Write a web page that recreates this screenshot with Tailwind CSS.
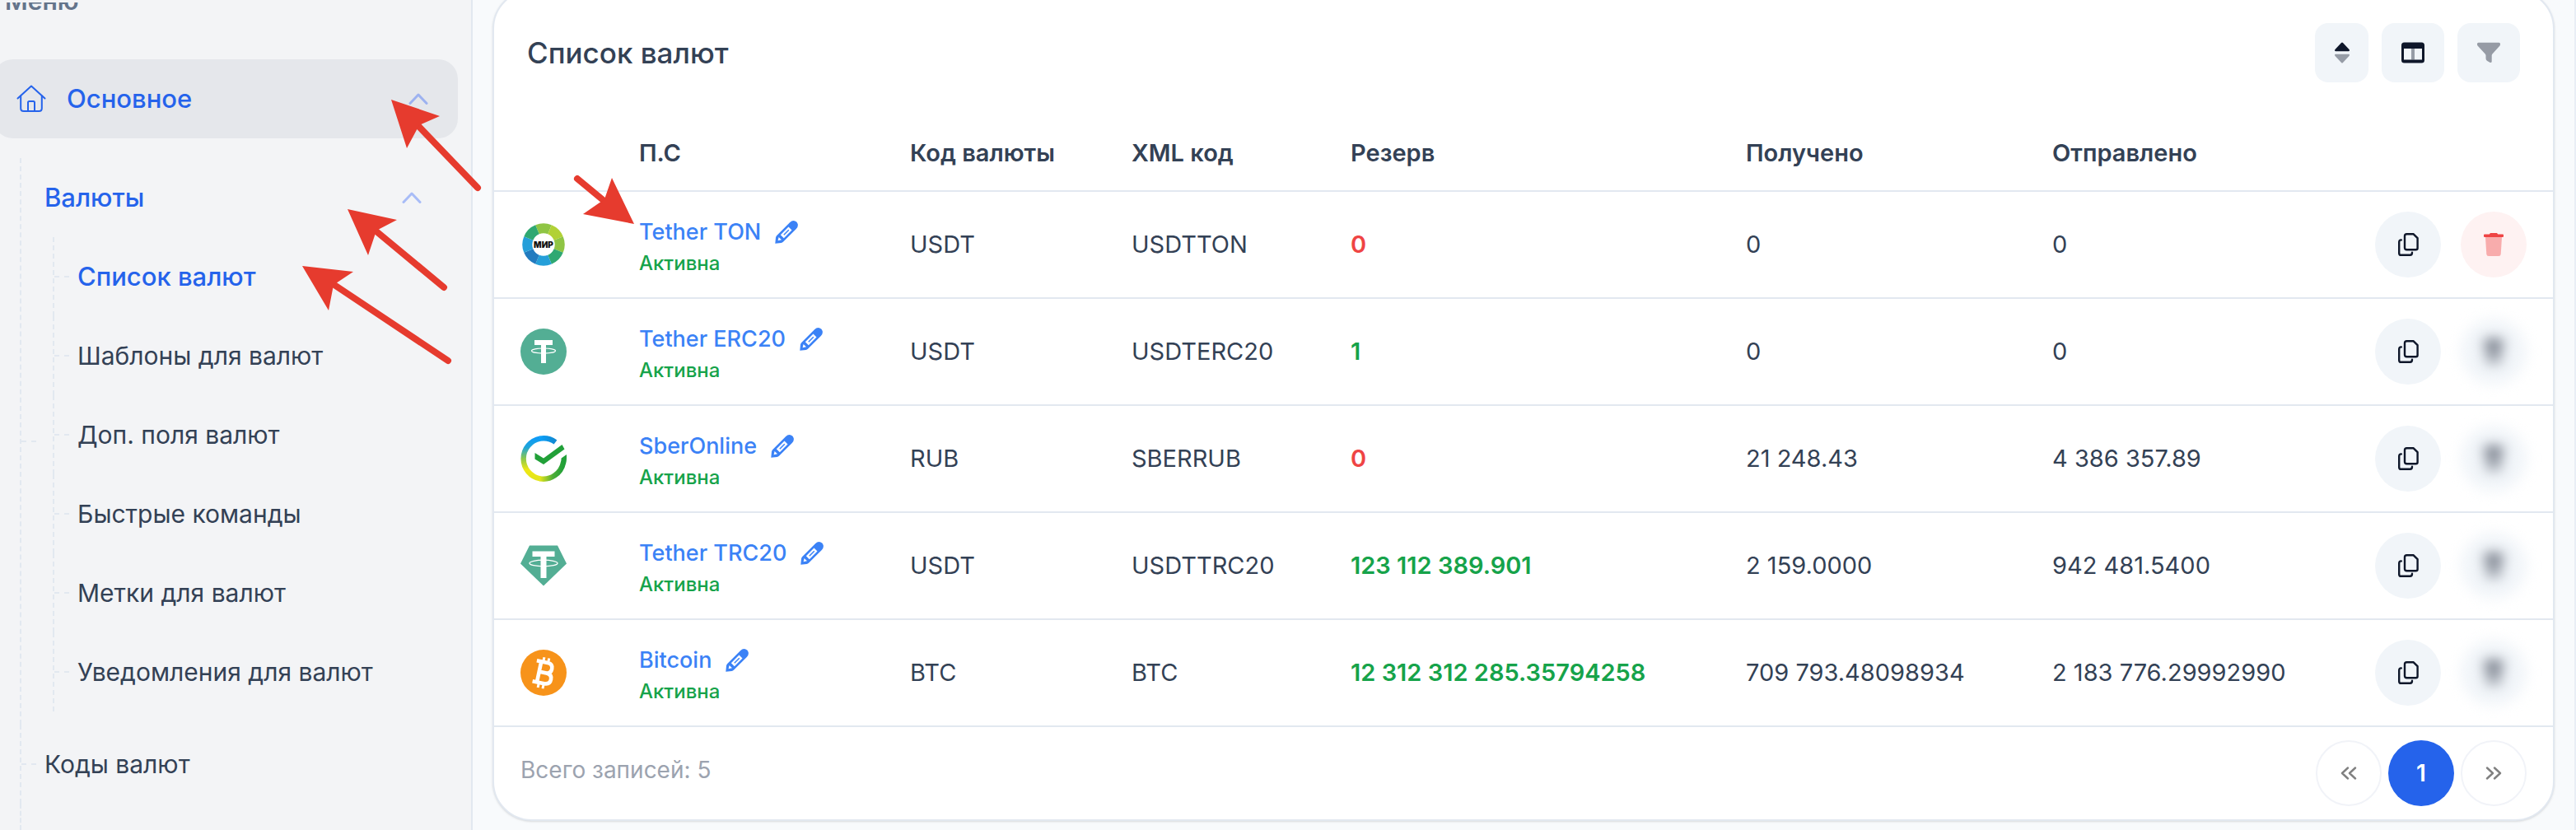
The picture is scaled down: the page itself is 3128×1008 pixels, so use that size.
<!DOCTYPE html>
<html lang="ru">
<head>
<meta charset="utf-8">
<title>Список валют</title>
<script src="https://cdn.jsdelivr.net/npm/@tailwindcss/browser@4"></script>
</head>
<body class="bg-[#f8fafc] font-['Inter',sans-serif] text-[28px] text-[#334155]">

<!-- Shared icons -->
<svg class="hidden" aria-hidden="true">
  <symbol id="chevron" viewBox="0 0 24 14"><path d="M2 12.500 12 2l10 10.500" fill="none" stroke="currentColor" stroke-width="3" stroke-linecap="round" stroke-linejoin="round"/></symbol>
  <symbol id="pencil" viewBox="0 0 28 28">
    <path d="M0.300 27.700 1 20.500Q1.300 19 2.500 17.800L18 2.200Q21-.800 24.500.400 27 1.300 27.700 4 28.500 7.500 25.800 10L10.200 25.500Q9 26.700 7.500 27Z" fill="currentColor"/>
    <path d="M6.800 17.200 16.500 7.500 20.500 11.500 10.800 21.200 8.800 19.200Z" fill="#fff"/>
    <path d="M3.600 24.200 4.600 20 8 23.300Z" fill="#fff"/>
    <path d="M10.800 17.200 16.800 11.200" stroke="currentColor" stroke-width="1.500"/>
  </symbol>
  <symbol id="copy" viewBox="0 0 26 28">
    <path d="M11.500 1.300h8.200l4.900 4.900v12.100q0 2-2 2H11.500q-2.500 0-2.500-2.500V3.800Q9 1.300 11.500 1.300Z" fill="none" stroke="currentColor" stroke-width="2.400" stroke-linejoin="round"/>
    <path d="M4.800 8.400Q2.200 8.400 2.200 11v13.400q0 2.400 2.400 2.400h11q2.400 0 2.400-3" fill="none" stroke="currentColor" stroke-width="2.400" stroke-linecap="round"/>
  </symbol>
  <symbol id="trash" viewBox="0 0 24 28">
    <path d="M2 5h20l-1.300 20.500q-.200 2.500-2.700 2.500H6q-2.500 0-2.700-2.500Z" fill="currentColor" opacity=".4"/>
    <path d="M8 0h8l1.200 1.500H23q1 0 1 1V4q0 1-1 1H1Q0 5 0 4V2.500q0-1 1-1h5.800Z" fill="currentColor"/>
  </symbol>
</svg>

<div class="relative flex min-h-screen border-r-2 border-[#e9eef5]">

  <!-- Sidebar -->
  <aside class="flex w-[574px] shrink-0 flex-col border-r-2 border-[#e2e8f0] bg-[#f3f4f6] text-[30px]">
    <div class="mt-[3px] h-[69px] overflow-hidden pl-1.5">
      <p class="-mt-5 leading-9 font-semibold text-[#64748b]">Меню</p>
    </div>
    <a href="#" class="mr-4 -ml-2 flex h-24 items-center gap-[25px] rounded-3xl bg-[#e5e7eb] pr-9 pl-7 text-[31px] font-medium text-[#2563eb]">
      <svg class="h-9 w-9" viewBox="0 0 36 36" fill="none" stroke="currentColor" stroke-width="2" stroke-linecap="round" stroke-linejoin="round"><path d="M1.500 17.500 18 2.500l16.500 15"/><path d="M5.200 14.500v15q0 3.500 3.500 3.500h18.600q3.500 0 3.500-3.500v-15"/><path d="M14 33V22.500q0-1.500 1.500-1.500h5q1.500 0 1.500 1.500V33"/></svg>
      <span class="flex-1">Основное</span>
      <svg class="h-3.5 w-6 text-[#9db2f0]"><use href="#chevron"/></svg>
    </a>
    <ul class="mt-6 flex flex-1 flex-col pl-6">
      <li class="grid grid-cols-[18px_1fr] items-center border-l-2 border-dashed border-[#e2e8f0]">
        <span class="border-t-2 border-dashed border-[#e2e8f0]"></span>
        <div class="pb-4">
          <a href="#" class="flex h-24 items-center justify-between pr-[60px] pl-2.5 text-[31px] font-medium text-[#2563eb]"><span>Валюты</span><svg class="h-3.5 w-6 text-[#a8bcf7]"><use href="#chevron"/></svg></a>
          <ul class="pl-5">
            <li class="grid h-24 grid-cols-[18px_1fr] items-center border-l-2 border-dashed border-[#e2e8f0]"><span class="border-t-2 border-dashed border-[#e2e8f0]"></span><a href="#" class="pl-2.5 text-[31px] font-medium text-[#2563eb]">Список валют</a></li>
            <li class="grid h-24 grid-cols-[18px_1fr] items-center border-l-2 border-dashed border-[#e2e8f0]"><span class="border-t-2 border-dashed border-[#e2e8f0]"></span><a href="#" class="pl-2.5">Шаблоны для валют</a></li>
            <li class="grid h-24 grid-cols-[18px_1fr] items-center border-l-2 border-dashed border-[#e2e8f0]"><span class="border-t-2 border-dashed border-[#e2e8f0]"></span><a href="#" class="pl-2.5">Доп. поля валют</a></li>
            <li class="grid h-24 grid-cols-[18px_1fr] items-center border-l-2 border-dashed border-[#e2e8f0]"><span class="border-t-2 border-dashed border-[#e2e8f0]"></span><a href="#" class="pl-2.5">Быстрые команды</a></li>
            <li class="grid h-24 grid-cols-[18px_1fr] items-center border-l-2 border-dashed border-[#e2e8f0]"><span class="border-t-2 border-dashed border-[#e2e8f0]"></span><a href="#" class="pl-2.5">Метки для валют</a></li>
            <li class="grid h-24 grid-cols-[18px_1fr] items-center border-l-2 border-dashed border-[#e2e8f0]"><span class="border-t-2 border-dashed border-[#e2e8f0]"></span><a href="#" class="pl-2.5">Уведомления для валют</a></li>
          </ul>
        </div>
      </li>
      <li class="grid h-24 grid-cols-[18px_1fr] items-center border-l-2 border-dashed border-[#e2e8f0]"><span class="border-t-2 border-dashed border-[#e2e8f0]"></span><a href="#" class="pl-2.5">Коды валют</a></li>
      <li class="flex-1 border-l-2 border-dashed border-[#e2e8f0]"></li>
    </ul>
  </aside>

  <!-- Currency list -->
  <main class="min-w-0 flex-1 overflow-hidden px-6 pb-2.5">
    <section class="-mt-[13px] rounded-[48px] border-2 border-[#e2e8f0] bg-white shadow-sm">
      <header class="flex items-center justify-between px-10 pt-[39px] pb-10">
        <h1 class="text-[35px] leading-[72px] font-medium">Список валют</h1>
        <div class="flex gap-4">
          <button type="button" aria-label="Сортировка" class="flex h-[72px] w-[65px] items-center justify-center rounded-2xl bg-[#f1f5f9] text-[#0f172a]"><svg class="h-[26px] w-[18px]" viewBox="0 0 18 26" fill="currentColor"><path d="M8 1q1-1 2 0l7.500 8q1.200 2-.500 2.300H1Q-.700 11 .5 9Z"/><path d="M1 14.700h16q1.700.300.500 2.300L10 25q-1 1-2 0L.5 17q-1.200-2 .5-2.300Z" opacity=".4"/></svg></button>
          <button type="button" aria-label="Столбцы" class="flex h-[72px] w-[76px] items-center justify-center rounded-2xl bg-[#f1f5f9] text-[#0f172a]"><svg class="h-[26px] w-7" viewBox="0 0 28 26" fill="currentColor"><path d="M3.500.500h21Q28 .5 28 4v18q0 3.500-3.500 3.500h-21Q0 25.500 0 22V4Q0 .5 3.500.500ZM3 8v13.500h22V8Z" fill-rule="evenodd"/><path d="M12 8h4v13.500h-4Z" opacity=".4"/></svg></button>
          <button type="button" aria-label="Фильтр" class="flex h-[72px] w-[76px] items-center justify-center rounded-2xl bg-[#f1f5f9] text-[#0f172a]"><svg class="h-[26px] w-7" viewBox="0 0 28 26" fill="currentColor" opacity=".4"><path d="M1.500.700h25q1.500 0 1.500 1.500v.8q0 .8-.5 1.500L18.500 14.500q-.800 1-.800 2v7q0 2-2 1.500l-3.500-2q-1.700-1-1.700-3v-3.500q0-1-.800-2L.5 4.500Q0 3.800 0 3v-.8Q0 .7 1.500.700Z"/></svg></button>
        </div>
      </header>

      <table class="w-full table-fixed border-collapse text-left text-[29px]">
        <colgroup><col class="w-[144px]"><col class="w-[329px]"><col class="w-[269px]"><col class="w-[266px]"><col class="w-[480px]"><col class="w-[372px]"><col class="w-[392px]"><col class="w-[248px]"></colgroup>
        <thead>
          <tr class="h-[92px] border-b-2 border-[#e2e8f0]">
            <th></th>
            <th class="px-8 font-semibold">П.С</th>
            <th class="px-8 font-semibold">Код валюты</th>
            <th class="px-8 font-semibold">XML код</th>
            <th class="px-8 font-semibold">Резерв</th>
            <th class="px-8 font-semibold">Получено</th>
            <th class="px-8 font-semibold">Отправлено</th>
            <th></th>
          </tr>
        </thead>
        <tbody>
          <tr class="h-[130px] border-b-2 border-[#e2e8f0]">
            <td class="pl-8">
              <svg class="h-14 w-14" viewBox="0 0 56 56" fill="none" stroke-width="12">
                <g transform="rotate(-112.500 28 28)">
                  <circle cx="28" cy="28" r="19.700" pathLength="8" stroke="#8fc544" stroke-dasharray="1 7"/>
                  <circle cx="28" cy="28" r="19.700" pathLength="8" stroke="#b1d136" stroke-dasharray="1 7" stroke-dashoffset="-1"/>
                  <circle cx="28" cy="28" r="19.700" pathLength="8" stroke="#8fc544" stroke-dasharray="1 7" stroke-dashoffset="-2"/>
                  <circle cx="28" cy="28" r="19.700" pathLength="8" stroke="#2fa872" stroke-dasharray="1 7" stroke-dashoffset="-3"/>
                  <circle cx="28" cy="28" r="19.700" pathLength="8" stroke="#259fd9" stroke-dasharray="1 7" stroke-dashoffset="-4"/>
                  <circle cx="28" cy="28" r="19.700" pathLength="8" stroke="#227bbf" stroke-dasharray="1 7" stroke-dashoffset="-5"/>
                  <circle cx="28" cy="28" r="19.700" pathLength="8" stroke="#259fd9" stroke-dasharray="1 7" stroke-dashoffset="-6"/>
                  <circle cx="28" cy="28" r="19.700" pathLength="8" stroke="#2fa872" stroke-dasharray="1 7" stroke-dashoffset="-7"/>
                </g>
                <text x="28" y="32" text-anchor="middle" fill="#111" class="text-[10px] font-black">МИР</text>
              </svg>
            </td>
            <td class="px-8 pt-1.5 font-medium">
              <a href="#" class="flex items-center gap-[17px] text-[27px] leading-10 whitespace-nowrap text-[#3b82f6]">Tether TON<svg class="h-7 w-7"><use href="#pencil"/></svg></a>
              <p class="text-2xl leading-9 text-[#16a34a]">Активна</p>
            </td>
            <td class="px-8">USDT</td>
            <td class="px-8">USDTTON</td>
            <td class="px-8 font-semibold text-[#ef4444]">0</td>
            <td class="px-8">0</td>
            <td class="px-8">0</td>
            <td class="pr-8"><div class="flex justify-end gap-6">
              <button type="button" aria-label="Копировать" class="flex h-20 w-20 items-center justify-center rounded-full bg-[#f1f5f9] text-[#0f172a]"><svg class="h-7 w-[26px]"><use href="#copy"/></svg></button>
              <button type="button" aria-label="Удалить" class="flex h-20 w-20 items-center justify-center rounded-full bg-[#fef2f2] text-[#ef4444]"><svg class="h-7 w-6"><use href="#trash"/></svg></button>
            </div></td>
          </tr>
          <tr class="h-[130px] border-b-2 border-[#e2e8f0]">
            <td class="pl-8">
              <svg class="h-14 w-14" viewBox="0 0 56 56"><circle cx="28" cy="28" r="28" fill="#53ae94"/><path d="M17 14h22v6h-8v22h-6V20h-8Z" fill="#fff"/><ellipse cx="28" cy="27" rx="14.500" ry="3" fill="none" stroke="#fff" stroke-width="1.200"/><path d="M25.600 24.800h4.800v2.500h-4.800Z" fill="#fff"/></svg>
            </td>
            <td class="px-8 pt-1.5 font-medium">
              <a href="#" class="flex items-center gap-[17px] text-[27px] leading-10 whitespace-nowrap text-[#3b82f6]">Tether ERC20<svg class="h-7 w-7"><use href="#pencil"/></svg></a>
              <p class="text-2xl leading-9 text-[#16a34a]">Активна</p>
            </td>
            <td class="px-8">USDT</td>
            <td class="px-8">USDTERC20</td>
            <td class="px-8 font-semibold text-[#16a34a]">1</td>
            <td class="px-8">0</td>
            <td class="px-8">0</td>
            <td class="pr-8"><div class="flex justify-end gap-6">
              <button type="button" aria-label="Копировать" class="flex h-20 w-20 items-center justify-center rounded-full bg-[#f1f5f9] text-[#0f172a]"><svg class="h-7 w-[26px]"><use href="#copy"/></svg></button>
              <button type="button" disabled aria-label="Удалить" class="flex h-20 w-20 items-center justify-center rounded-full bg-[#f1f5f9] text-[#0f172a] blur-[8px]"><svg class="h-7 w-6"><use href="#trash"/></svg></button>
            </div></td>
          </tr>
          <tr class="h-[130px] border-b-2 border-[#e2e8f0]">
            <td class="pl-8">
              <svg class="h-14 w-14" viewBox="0 0 56 56" fill="none">
                <defs>
                  <linearGradient id="sb-left" x1="0" y1="0" x2="0" y2="1"><stop offset="0" stop-color="#0f9bf5"/><stop offset=".22" stop-color="#1fa5d8"/><stop offset=".5" stop-color="#8cc84b"/><stop offset=".78" stop-color="#efe815"/><stop offset="1" stop-color="#e3e51a"/></linearGradient>
                  <linearGradient id="sb-top" x1="0" y1="0" x2="1" y2="0"><stop offset="0" stop-color="#0aa0fa"/><stop offset="1" stop-color="#1187cf"/></linearGradient>
                  <linearGradient id="sb-bottom" x1="0" y1="0" x2="1" y2="0"><stop offset="0" stop-color="#e3e51a"/><stop offset=".55" stop-color="#4fae38"/><stop offset="1" stop-color="#21a038"/></linearGradient>
                </defs>
                <path d="M24 3.600A24.800 24.800 0 0 0 24 52.400" stroke="url(#sb-left)" stroke-width="6.400"/>
                <path d="M23.500 3.700A24.800 24.800 0 0 1 42.500 8" stroke="url(#sb-top)" stroke-width="6.400"/>
                <path d="M23.500 52.300A24.800 24.800 0 0 0 52 33" stroke="url(#sb-bottom)" stroke-width="6.400"/>
                <path d="M56 23v5q0 3-1 6.500l-6.200-1.800Q49.600 30 49.600 27.500Z" fill="#21a038"/>
                <path d="M17.500 21 28 27.500 50.500 11 53.500 16.500 28 35 17.500 28.500Z" fill="#21a038"/>
              </svg>
            </td>
            <td class="px-8 pt-1.5 font-medium">
              <a href="#" class="flex items-center gap-[17px] text-[27px] leading-10 whitespace-nowrap text-[#3b82f6]">SberOnline<svg class="h-7 w-7"><use href="#pencil"/></svg></a>
              <p class="text-2xl leading-9 text-[#16a34a]">Активна</p>
            </td>
            <td class="px-8">RUB</td>
            <td class="px-8">SBERRUB</td>
            <td class="px-8 font-semibold text-[#ef4444]">0</td>
            <td class="px-8">21 248.43</td>
            <td class="px-8">4 386 357.89</td>
            <td class="pr-8"><div class="flex justify-end gap-6">
              <button type="button" aria-label="Копировать" class="flex h-20 w-20 items-center justify-center rounded-full bg-[#f1f5f9] text-[#0f172a]"><svg class="h-7 w-[26px]"><use href="#copy"/></svg></button>
              <button type="button" disabled aria-label="Удалить" class="flex h-20 w-20 items-center justify-center rounded-full bg-[#f1f5f9] text-[#0f172a] blur-[8px]"><svg class="h-7 w-6"><use href="#trash"/></svg></button>
            </div></td>
          </tr>
          <tr class="h-[130px] border-b-2 border-[#e2e8f0]">
            <td class="pl-8">
              <svg class="h-14 w-14" viewBox="0 0 56 56"><path d="M11 3.500h34L56 25.500 28 52.500 0 25.500Z" fill="#53ae94"/><path d="M14.500 10.500h27v6.500H31.500v26h-7V17h-10Z" fill="#fff"/><ellipse cx="28" cy="25" rx="17" ry="3.800" fill="none" stroke="#fff" stroke-width="1.300"/></svg>
            </td>
            <td class="px-8 pt-1.5 font-medium">
              <a href="#" class="flex items-center gap-[17px] text-[27px] leading-10 whitespace-nowrap text-[#3b82f6]">Tether TRC20<svg class="h-7 w-7"><use href="#pencil"/></svg></a>
              <p class="text-2xl leading-9 text-[#16a34a]">Активна</p>
            </td>
            <td class="px-8">USDT</td>
            <td class="px-8">USDTTRC20</td>
            <td class="px-8 font-semibold text-[#16a34a]">123 112 389.901</td>
            <td class="px-8">2 159.0000</td>
            <td class="px-8">942 481.5400</td>
            <td class="pr-8"><div class="flex justify-end gap-6">
              <button type="button" aria-label="Копировать" class="flex h-20 w-20 items-center justify-center rounded-full bg-[#f1f5f9] text-[#0f172a]"><svg class="h-7 w-[26px]"><use href="#copy"/></svg></button>
              <button type="button" disabled aria-label="Удалить" class="flex h-20 w-20 items-center justify-center rounded-full bg-[#f1f5f9] text-[#0f172a] blur-[8px]"><svg class="h-7 w-6"><use href="#trash"/></svg></button>
            </div></td>
          </tr>
          <tr class="h-[130px] border-b-2 border-[#e2e8f0]">
            <td class="pl-8">
              <svg class="h-14 w-14" viewBox="0 0 56 56"><circle cx="28" cy="28" r="28" fill="#f7931a"/>
                <g transform="rotate(12 28 28)" fill="none" stroke="#fff">
                  <path d="M17 15.300h13.500q6.500 0 6.500 6.200t-6.500 6.200H23M23 27.700h8.500q7 0 7 6.500t-7 6.500H17M22.500 15.300v25.400" stroke-width="4.600"/>
                  <path d="M25 9.500v6M31 9.500v6M25 41v6M31 41v6" stroke-width="3"/>
                </g>
              </svg>
            </td>
            <td class="px-8 pt-1.5 font-medium">
              <a href="#" class="flex items-center gap-[17px] text-[27px] leading-10 whitespace-nowrap text-[#3b82f6]">Bitcoin<svg class="h-7 w-7"><use href="#pencil"/></svg></a>
              <p class="text-2xl leading-9 text-[#16a34a]">Активна</p>
            </td>
            <td class="px-8">BTC</td>
            <td class="px-8">BTC</td>
            <td class="px-8 font-semibold text-[#16a34a]">12 312 312 285.35794258</td>
            <td class="px-8">709 793.48098934</td>
            <td class="px-8">2 183 776.29992990</td>
            <td class="pr-8"><div class="flex justify-end gap-6">
              <button type="button" aria-label="Копировать" class="flex h-20 w-20 items-center justify-center rounded-full bg-[#f1f5f9] text-[#0f172a]"><svg class="h-7 w-[26px]"><use href="#copy"/></svg></button>
              <button type="button" disabled aria-label="Удалить" class="flex h-20 w-20 items-center justify-center rounded-full bg-[#f1f5f9] text-[#0f172a] blur-[8px]"><svg class="h-7 w-6"><use href="#trash"/></svg></button>
            </div></td>
          </tr>
        </tbody>
      </table>

      <footer class="flex items-start justify-between px-8 py-4">
        <p class="leading-[72px] text-[#9ca3af]">Всего записей: 5</p>
        <nav class="flex gap-2" aria-label="Страницы">
          <button type="button" aria-label="Назад" class="flex h-20 w-20 items-center justify-center rounded-full border-2 border-[#f1f3f8] text-[#808080]"><svg class="h-4 w-5" viewBox="0 0 20 16" fill="none" stroke="currentColor" stroke-width="2.400" stroke-linecap="round" stroke-linejoin="round"><path d="M9 1.500 2 8l7 6.500M18 1.500 11 8l7 6.500"/></svg></button>
          <button type="button" class="h-20 w-20 rounded-full bg-[#2563eb] font-semibold text-white">1</button>
          <button type="button" aria-label="Вперёд" class="flex h-20 w-20 items-center justify-center rounded-full border-2 border-[#f1f3f8] text-[#808080]"><svg class="h-4 w-5" viewBox="0 0 20 16" fill="none" stroke="currentColor" stroke-width="2.400" stroke-linecap="round" stroke-linejoin="round"><path d="M2 1.500 9 8l-7 6.500M11 1.500 18 8l-7 6.500"/></svg></button>
        </nav>
      </footer>
    </section>
  </main>

  <!-- Pointer arrows over the page -->
  <svg class="pointer-events-none absolute top-0 left-0 h-[460px] w-[800px]" viewBox="0 0 800 460" fill="#e63b2e" stroke="#e63b2e" stroke-width="8" stroke-linecap="round">
    <path d="M508 153 580 228M457 281 539 349M406 346 544 438M701 217 736 246"/>
    <path stroke="none" d="M475 121 534 141 509 152 494 180ZM422 254 482 267 457 280 447 310ZM367 323 429 330 405 346 399 377ZM770 272 743 216 734 242 708 260Z"/>
  </svg>
</div>
</body>
</html>
